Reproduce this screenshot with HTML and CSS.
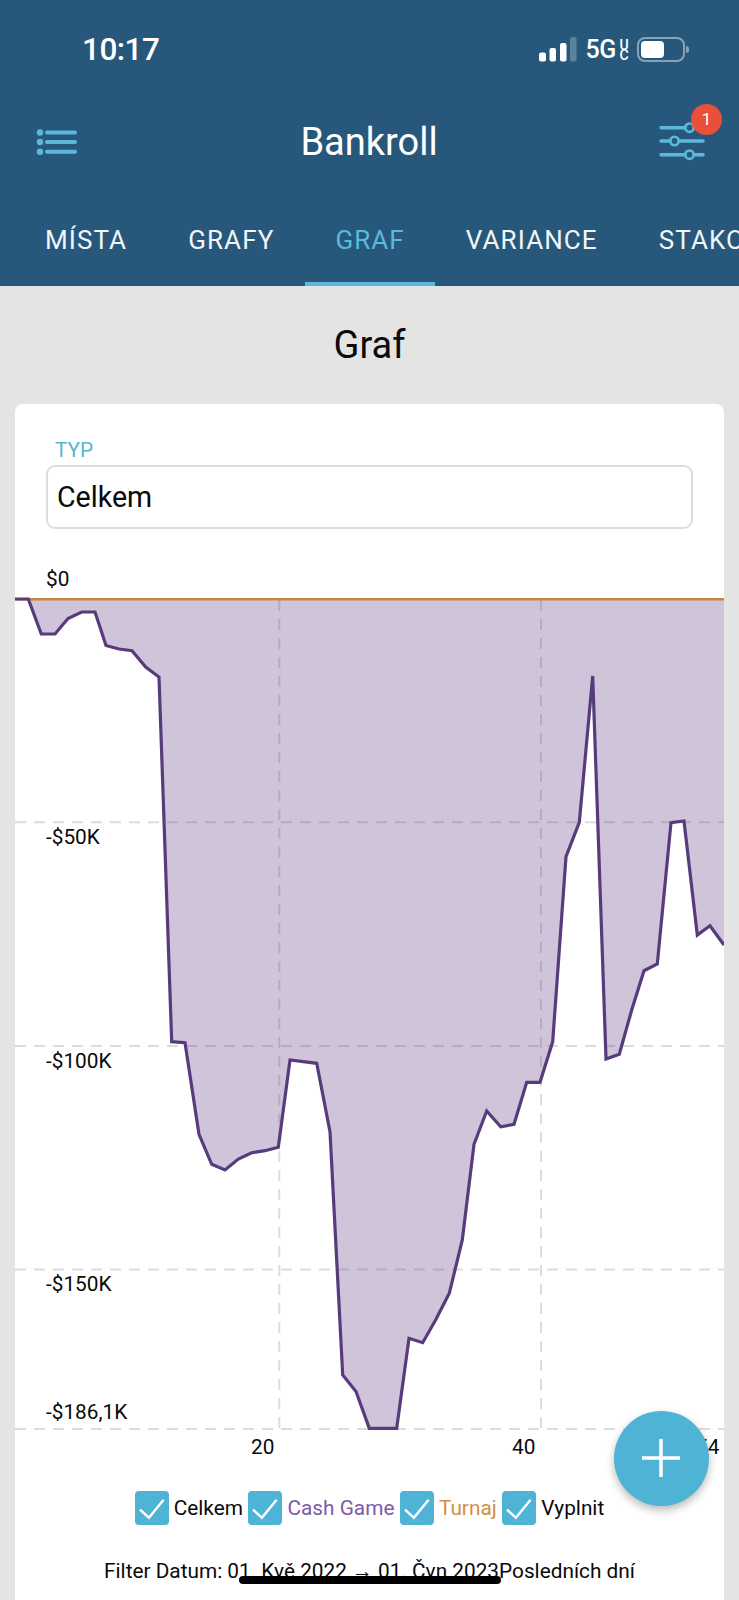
FILE: index.html
```html
<!DOCTYPE html>
<html lang="cs">
<head>
<meta charset="utf-8">
<title>Bankroll</title>
<link rel="stylesheet" href="styles.css">
</head>
<body>
<div class="screen">
  <header class="header">
    <div class="status">
      <span class="time">10:17</span>
      <div class="status-right">
        <svg class="signal" width="38" height="26" viewBox="0 0 38 26">
          <rect x="0" y="15.5" width="7" height="9" rx="2" fill="#fff"/>
          <rect x="10.5" y="11" width="6.5" height="13.5" rx="2" fill="#fff"/>
          <rect x="21" y="6" width="6.5" height="18.5" rx="2" fill="#fff"/>
          <rect x="31" y="0" width="6.5" height="24.5" rx="2" fill="#fff" fill-opacity=".25"/>
        </svg>
        <span class="net">5G</span>
        <span class="uc"><span>U</span><span>C</span></span>
        <span class="battery"><span class="battery-fill"></span></span>
      </div>
    </div>
    <div class="toolbar">
      <div class="slot">
        <svg class="menu-icon" width="44" height="30" viewBox="0 0 44 30">
          <g fill="#5cb9dc"><circle cx="5" cy="5.5" r="3.2"/><circle cx="5" cy="15" r="3.2"/><circle cx="5" cy="24.7" r="3.2"/></g>
          <g stroke="#5cb9dc" stroke-width="4" stroke-linecap="round"><path d="M12 5.5H40"/><path d="M12 15H40"/><path d="M12 24.7H40"/></g>
        </svg>
      </div>
      <h1 class="title">Bankroll</h1>
      <div class="slot slot-right">
        <div class="filter">
          <svg width="46" height="40" viewBox="0 0 46 40">
            <g stroke="#5cb9dc" stroke-width="3.5" fill="none" stroke-linecap="round">
              <path d="M2 6.7H26"/><path d="M35 6.7H44"/>
              <path d="M2 20H11"/><path d="M20 20H44"/>
              <path d="M2 33.7H26"/><path d="M35 33.7H44"/>
            </g>
            <g stroke="#5cb9dc" stroke-width="2.6" fill="none"><circle cx="30.5" cy="6.7" r="4.2"/><circle cx="15.5" cy="20" r="4.2"/><circle cx="30.5" cy="33.7" r="4.2"/></g>
          </svg>
          <span class="badge">1</span>
        </div>
      </div>
    </div>
    <nav class="tabs">
      <a class="tab">MÍSTA</a>
      <a class="tab">GRAFY</a>
      <a class="tab tab-active">GRAF</a>
      <a class="tab">VARIANCE</a>
      <a class="tab">STAKOVÁNÍ</a>
    </nav>
  </header>

  <main class="content">
    <h2 class="heading">Graf</h2>
    <section class="card">
      <div class="field-label">TYP</div>
      <div class="select">Celkem</div>

      <svg class="chart" width="709" height="920" viewBox="15 560 709 920">
        <g class="grid">
          <path d="M15 822.3H724"/>
          <path d="M15 1046H724"/>
          <path d="M15 1269.5H724"/>
          <path d="M15 1429H724"/>
          <path d="M279.3 600V1429"/>
          <path d="M541 600V1429"/>
        </g>
        <polygon class="area" points="15,599 28.3,599 41.3,634 55,634 68,618.5 81.7,612 95,612 106,645.5 119,649 132,650.7 145.7,667 159,677 171.7,1041.7 185,1042.7 199,1134.3 211.7,1164.3 225,1170 238.3,1159 251.7,1152.7 265,1150.7 278.3,1147.3 290,1060 303.3,1061.7 316.7,1063.3 330,1131.7 342.7,1375 356,1391.5 369.3,1428.3 396.7,1428.3 409,1338.3 422.7,1342.7 436,1319.3 449.3,1293.3 462.3,1240 474,1144.3 486.7,1111 500.7,1126.7 514,1124.3 526.7,1082.3 540,1082.3 552.7,1041.7 566,856.7 579.3,822.3 592.7,676 606,1059 619.3,1054.3 631.7,1010 644,970.7 657.3,964 671,822.7 684,821 697.3,935 710,925.7 724,945 724,599"/>
        <path class="zero" d="M15 599.3H724"/>
        <polyline class="line" points="15,599 28.3,599 41.3,634 55,634 68,618.5 81.7,612 95,612 106,645.5 119,649 132,650.7 145.7,667 159,677 171.7,1041.7 185,1042.7 199,1134.3 211.7,1164.3 225,1170 238.3,1159 251.7,1152.7 265,1150.7 278.3,1147.3 290,1060 303.3,1061.7 316.7,1063.3 330,1131.7 342.7,1375 356,1391.5 369.3,1428.3 396.7,1428.3 409,1338.3 422.7,1342.7 436,1319.3 449.3,1293.3 462.3,1240 474,1144.3 486.7,1111 500.7,1126.7 514,1124.3 526.7,1082.3 540,1082.3 552.7,1041.7 566,856.7 579.3,822.3 592.7,676 606,1059 619.3,1054.3 631.7,1010 644,970.7 657.3,964 671,822.7 684,821 697.3,935 710,925.7 724,945"/>
        <g class="axis">
          <text x="46" y="585.5">$0</text>
          <text x="46" y="843.5">-$50K</text>
          <text x="46" y="1068">-$100K</text>
          <text x="46" y="1291">-$150K</text>
          <text x="46" y="1419">-$186,1K</text>
          <text x="251" y="1453.5">20</text>
          <text x="512" y="1453.5">40</text>
          <text x="696" y="1453.5">54</text>
        </g>
      </svg>

      <div class="legend">
        <label class="legend-item"><span class="check"><svg width="34" height="34" viewBox="0 0 34 34"><path d="M5 18.7L13.9 26.7L28.6 8.7"/></svg></span><span>Celkem</span></label>
        <label class="legend-item"><span class="check"><svg width="34" height="34" viewBox="0 0 34 34"><path d="M5 18.7L13.9 26.7L28.6 8.7"/></svg></span><span class="cash">Cash Game</span></label>
        <label class="legend-item"><span class="check"><svg width="34" height="34" viewBox="0 0 34 34"><path d="M5 18.7L13.9 26.7L28.6 8.7"/></svg></span><span class="tour">Turnaj</span></label>
        <label class="legend-item"><span class="check"><svg width="34" height="34" viewBox="0 0 34 34"><path d="M5 18.7L13.9 26.7L28.6 8.7"/></svg></span><span>Vyplnit</span></label>
      </div>
      <p class="filter-text">Filter Datum: 01. Kvě 2022 → 01. Čvn 2023Posledních dní</p>
    </section>
  </main>

  <button class="fab" aria-label="Přidat">
    <svg width="38" height="38" viewBox="0 0 38 38"><path d="M19 0V38M0 19H38"/></svg>
  </button>
  <div class="home-indicator"></div>
</div>
</body>
</html>
```
FILE: styles.css
```css
* { box-sizing: border-box; }
html, body { margin: 0; padding: 0; }
body { font-family: Roboto, "Liberation Sans", sans-serif; background: #e4e4e4; color: #0a0a0a; }

.screen { position: relative; width: 739px; height: 1600px; overflow: hidden; background: #e4e4e4; }

.header { background: #27587b; height: 286px; color: #fff; }

.status { height: 98px; display: flex; justify-content: space-between; align-items: flex-start; padding: 31px 54px 0 82px; }
.time { font-size: 31.5px; font-weight: 500; line-height: 38px; letter-spacing: -.5px; }
.status-right { display: flex; align-items: flex-start; padding-top: 6px; }
.signal { margin-right: 9px; }
.net { font-size: 25px; font-weight: 500; line-height: 25px; letter-spacing: -.4px; }
.uc { display: flex; flex-direction: column; width: 10px; align-items: center; margin-left: 3px; font-size: 14px; font-weight: 500; line-height: 10px; padding-top: 3px; margin-right: 8px; }
.battery { position: relative; display: block; width: 48px; height: 25px; border: 2px solid rgba(255, 255, 255, .45); border-radius: 8px; padding: 2px; }
.battery::after { content: ""; position: absolute; right: -6px; top: 7px; width: 3px; height: 7px; border-radius: 0 3px 3px 0; background: rgba(255, 255, 255, .45); }
.battery-fill { display: block; width: 23px; height: 17px; background: #fff; border-radius: 4px; }

.toolbar { height: 88px; display: flex; align-items: center; }
.slot { flex: 1; display: flex; padding-left: 35px; }
.slot-right { justify-content: flex-end; padding-left: 0; padding-right: 34px; }
.title { margin: 0 2px 0 0; font-size: 38px; font-weight: 400; line-height: 44px; }
.filter { position: relative; width: 46px; height: 40px; margin-top: -2px; }
.filter svg { display: block; }
.badge { position: absolute; left: 32px; top: -17px; width: 31px; height: 31px; border-radius: 50%; background: #e8503a; color: #fff; font-size: 17px; line-height: 31px; text-align: center; }

.tabs { display: flex; padding: 22px 0 0 14.5px; overflow: hidden; white-space: nowrap; }
.tab { flex: none; height: 78px; padding: 10px 30.5px 0; font-size: 26px; line-height: 44px; letter-spacing: 1.1px; color: #f2f5f8; border-bottom: 4px solid transparent; }
.tab-active { color: #5cb9dc; border-bottom-color: #5cb9dc; }

.content { padding: 0 15px; }
.heading { margin: 0; height: 118px; padding-top: 36px; font-size: 38px; font-weight: 400; line-height: 46px; text-align: center; }

.card { background: #fff; border-radius: 8px; height: 1300px; padding-top: 34px; }
.field-label { margin-left: 40px; font-size: 20.8px; line-height: 24px; color: #5bb6cc; }
.select { margin: 3px 31px 0; height: 64px; border: 2px solid #dedede; border-radius: 9px; padding-left: 9px; font-size: 28.6px; line-height: 61px; }

.chart { display: block; margin-top: 31px; }
.grid path { stroke: #dddbe0; stroke-width: 2; stroke-dasharray: 11 8; fill: none; }
.area { fill: #5f3a82; fill-opacity: .3; }
.zero { stroke: #c8853f; stroke-width: 2.6; fill: none; }
.line { stroke: #573b7c; stroke-width: 3.2; fill: none; stroke-linejoin: miter; }
.axis text { font-family: Roboto, "Liberation Sans", sans-serif; font-size: 20.8px; fill: #0a0a0a; }

.legend { display: flex; justify-content: center; gap: 5.5px; margin-top: 11px; height: 34px; }
.legend-item { display: flex; align-items: center; gap: 5px; font-size: 20.8px; }
.check { display: block; width: 34px; height: 34px; border-radius: 4px; background: #4fb3d6; }
.check svg { display: block; }
.check path { fill: none; stroke: #fff; stroke-width: 2.4; }
.cash { color: #7d5aa8; }
.tour { color: #d28f45; }

.filter-text { margin: 34px 0 0; font-size: 20.8px; line-height: 24px; text-align: center; }

.fab { position: absolute; left: 613.5px; top: 1410.5px; width: 95px; height: 95px; padding: 0; border: 0; border-radius: 50%; background: #4fb3d6; box-shadow: 0 4px 8px rgba(0, 0, 0, .28); display: flex; align-items: center; justify-content: center; }
.fab path { stroke: #fff; stroke-width: 3.5; fill: none; }
.fab svg { display: block; }

.home-indicator { position: absolute; left: 239px; top: 1576px; width: 262px; height: 8px; border-radius: 4px; background: #000; }
```
